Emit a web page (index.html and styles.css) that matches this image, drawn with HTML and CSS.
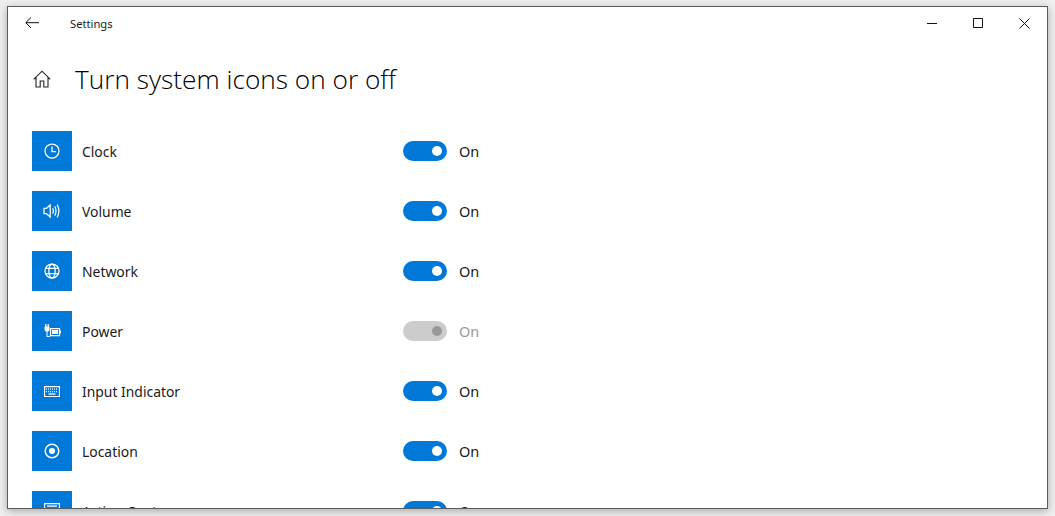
FILE: index.html
```html
<!DOCTYPE html>
<html lang="en">
<head>
  <meta charset="UTF-8" />
  <title>Settings</title>
  <link rel="stylesheet" href="styles.css">
</head>
<body>
  <div class="window">
    <div class="titlebar">
      <svg class="back" width="14" height="12" viewBox="0 0 14 12"><path d="M6 .5 .8 5.7 6 11M1 5.7H14" /></svg>
      <span class="app-name">Settings</span>
      <div class="controls">
        <div class="control"><svg width="10" height="10" viewBox="0 0 10 10"><path d="M0 5.5H10" /></svg></div>
        <div class="control"><svg width="10" height="10" viewBox="0 0 10 10"><path d="M.5 .5H9.5V9.5H.5Z" /></svg></div>
        <div class="control"><svg width="11" height="11" viewBox="0 0 11 11"><path d="M.5 .5 10.5 10.5M10.5 .5 .5 10.5" /></svg></div>
      </div>
    </div>

    <div class="header">
      <svg class="home" width="18" height="18" viewBox="0 0 18 18"><path d="M.7 9.3 9 1.2 17.3 9.3M3 7.5V17H7.2V11H10.8V17H15V7.5" /></svg>
      <h1>Turn system icons on or off</h1>
    </div>

    <div class="list">
      <div class="row">
        <div class="tile"><svg width="16" height="16" viewBox="0 0 16 16"><circle cx="8" cy="8" r="7" /><path d="M8 3.5V8.6H12" /></svg></div>
        <span class="name">Clock</span>
        <div class="switch"><i></i></div>
        <span class="state">On</span>
      </div>
      <div class="row">
        <div class="tile"><svg width="18" height="16" viewBox="0 0 18 16"><path d="M1 5.3H3.5L7.2 2V14L3.5 10.7H1ZM9.6 5.3Q11.2 8 9.6 10.7M11.8 3.4Q14.2 8 11.8 12.6M14.2 1.6Q17.6 8 14.2 14.4" /></svg></div>
        <span class="name">Volume</span>
        <div class="switch"><i></i></div>
        <span class="state">On</span>
      </div>
      <div class="row">
        <div class="tile"><svg width="16" height="16" viewBox="0 0 16 16"><circle cx="8" cy="8" r="7" /><ellipse cx="8" cy="8" rx="3.2" ry="7" /><path d="M1.5 5.3H14.5M1.5 10.7H14.5" /></svg></div>
        <span class="name">Network</span>
        <div class="switch"><i></i></div>
        <span class="state">On</span>
      </div>
      <div class="row">
        <div class="tile"><svg width="17" height="14" viewBox="0 0 17 14"><path class="fill" d="M.5 2.5H5.5V5.5Q5.5 7.5 3.5 7.8V12H6V13H2.5V7.8Q.5 7.5 .5 5.5Z" /><path d="M1.8 0V3M4.2 0V3M6.5 4.5H15.5V11.5H6.5Z" /><path class="fill" d="M8 6H14V10H8ZM16 6.5H17V9.5H16Z" /></svg></div>
        <span class="name">Power</span>
        <div class="switch off"><i></i></div>
        <span class="state off">On</span>
      </div>
      <div class="row">
        <div class="tile"><svg width="16" height="11" viewBox="0 0 16 11"><path d="M.5 .5H15.5V10.5H.5Z" /><path class="keys" d="M2 3H14M2 5.5H14" /><path d="M4.5 8H11.5" /></svg></div>
        <span class="name">Input Indicator</span>
        <div class="switch"><i></i></div>
        <span class="state">On</span>
      </div>
      <div class="row">
        <div class="tile"><svg width="16" height="16" viewBox="0 0 16 16"><circle class="ring" cx="8" cy="8" r="6.8" /><circle class="fill" cx="8" cy="8" r="3" /></svg></div>
        <span class="name">Location</span>
        <div class="switch"><i></i></div>
        <span class="state">On</span>
      </div>
      <div class="row">
        <div class="tile"><svg width="16" height="16" viewBox="0 0 16 16"><path d="M.5 .5H15.5V11.5H.5ZM3 3H13M3 6H13M3 9H13" /></svg></div>
        <span class="name">Action Center</span>
        <div class="switch"><i></i></div>
        <span class="state">On</span>
      </div>
    </div>
  </div>
</body>
</html>
```

FILE: styles.css
```css
html, body {
  height: 516px;
  overflow: hidden;
}

body {
  margin: 0;
  padding: 6px 7px;
  box-sizing: border-box;
  background: #efefef;
  font-family: "Noto Sans", "Open Sans", sans-serif;
  color: #1a1a1a;
}

svg {
  display: block;
  fill: none;
  stroke: currentColor;
  stroke-width: 1;
}

svg .fill {
  fill: currentColor;
  stroke: none;
}

svg .keys {
  stroke-dasharray: 1 1;
}

svg .ring {
  stroke-width: 1.5;
}

.window {
  height: 503px;
  box-sizing: border-box;
  border: 1px solid #5c5c5c;
  background: #fff;
  overflow: hidden;
  box-shadow: 0 2px 8px rgba(0,0,0,0.3);
}

.titlebar {
  display: flex;
  align-items: center;
  height: 32px;
  padding-left: 17px;
}

.back {
  margin-right: 31px;
  color: #111;
}

.app-name {
  font-size: 11.2px;
  flex: 1;
}

.controls {
  display: flex;
}

.control {
  width: 46px;
  height: 32px;
  display: flex;
  align-items: center;
  justify-content: center;
  color: #111;
}

.header {
  display: flex;
  align-items: center;
  height: 80px;
  padding-left: 25px;
}

.home {
  margin-right: 24px;
  color: #222;
  stroke-width: 1.1;
}

h1 {
  margin: 0;
  font-family: "Open Sans", sans-serif;
  font-weight: 300;
  font-size: 26.25px;
  color: #000;
}

.list {
  padding: 12px 0 0 24px;
}

.row {
  display: flex;
  align-items: center;
  height: 40px;
  margin-bottom: 20px;
}

.tile {
  width: 40px;
  height: 40px;
  background: #0078d7;
  color: #fff;
  display: flex;
  align-items: center;
  justify-content: center;
  margin-right: 10px;
}

.tile svg {
  stroke-width: 1.25;
}

.name {
  width: 321px;
  font-size: 13.9px;
}

.switch {
  width: 44px;
  height: 20px;
  border-radius: 10px;
  background: #0078d7;
  display: flex;
  align-items: center;
  justify-content: flex-end;
  padding-right: 5px;
  box-sizing: border-box;
  margin-right: 12px;
}

.switch i {
  width: 10px;
  height: 10px;
  border-radius: 50%;
  background: #fff;
}

.switch.off {
  background: #ccc;
}

.switch.off i {
  background: #999;
}

.state {
  font-size: 14.5px;
}

.state.off {
  color: #999;
}
```
